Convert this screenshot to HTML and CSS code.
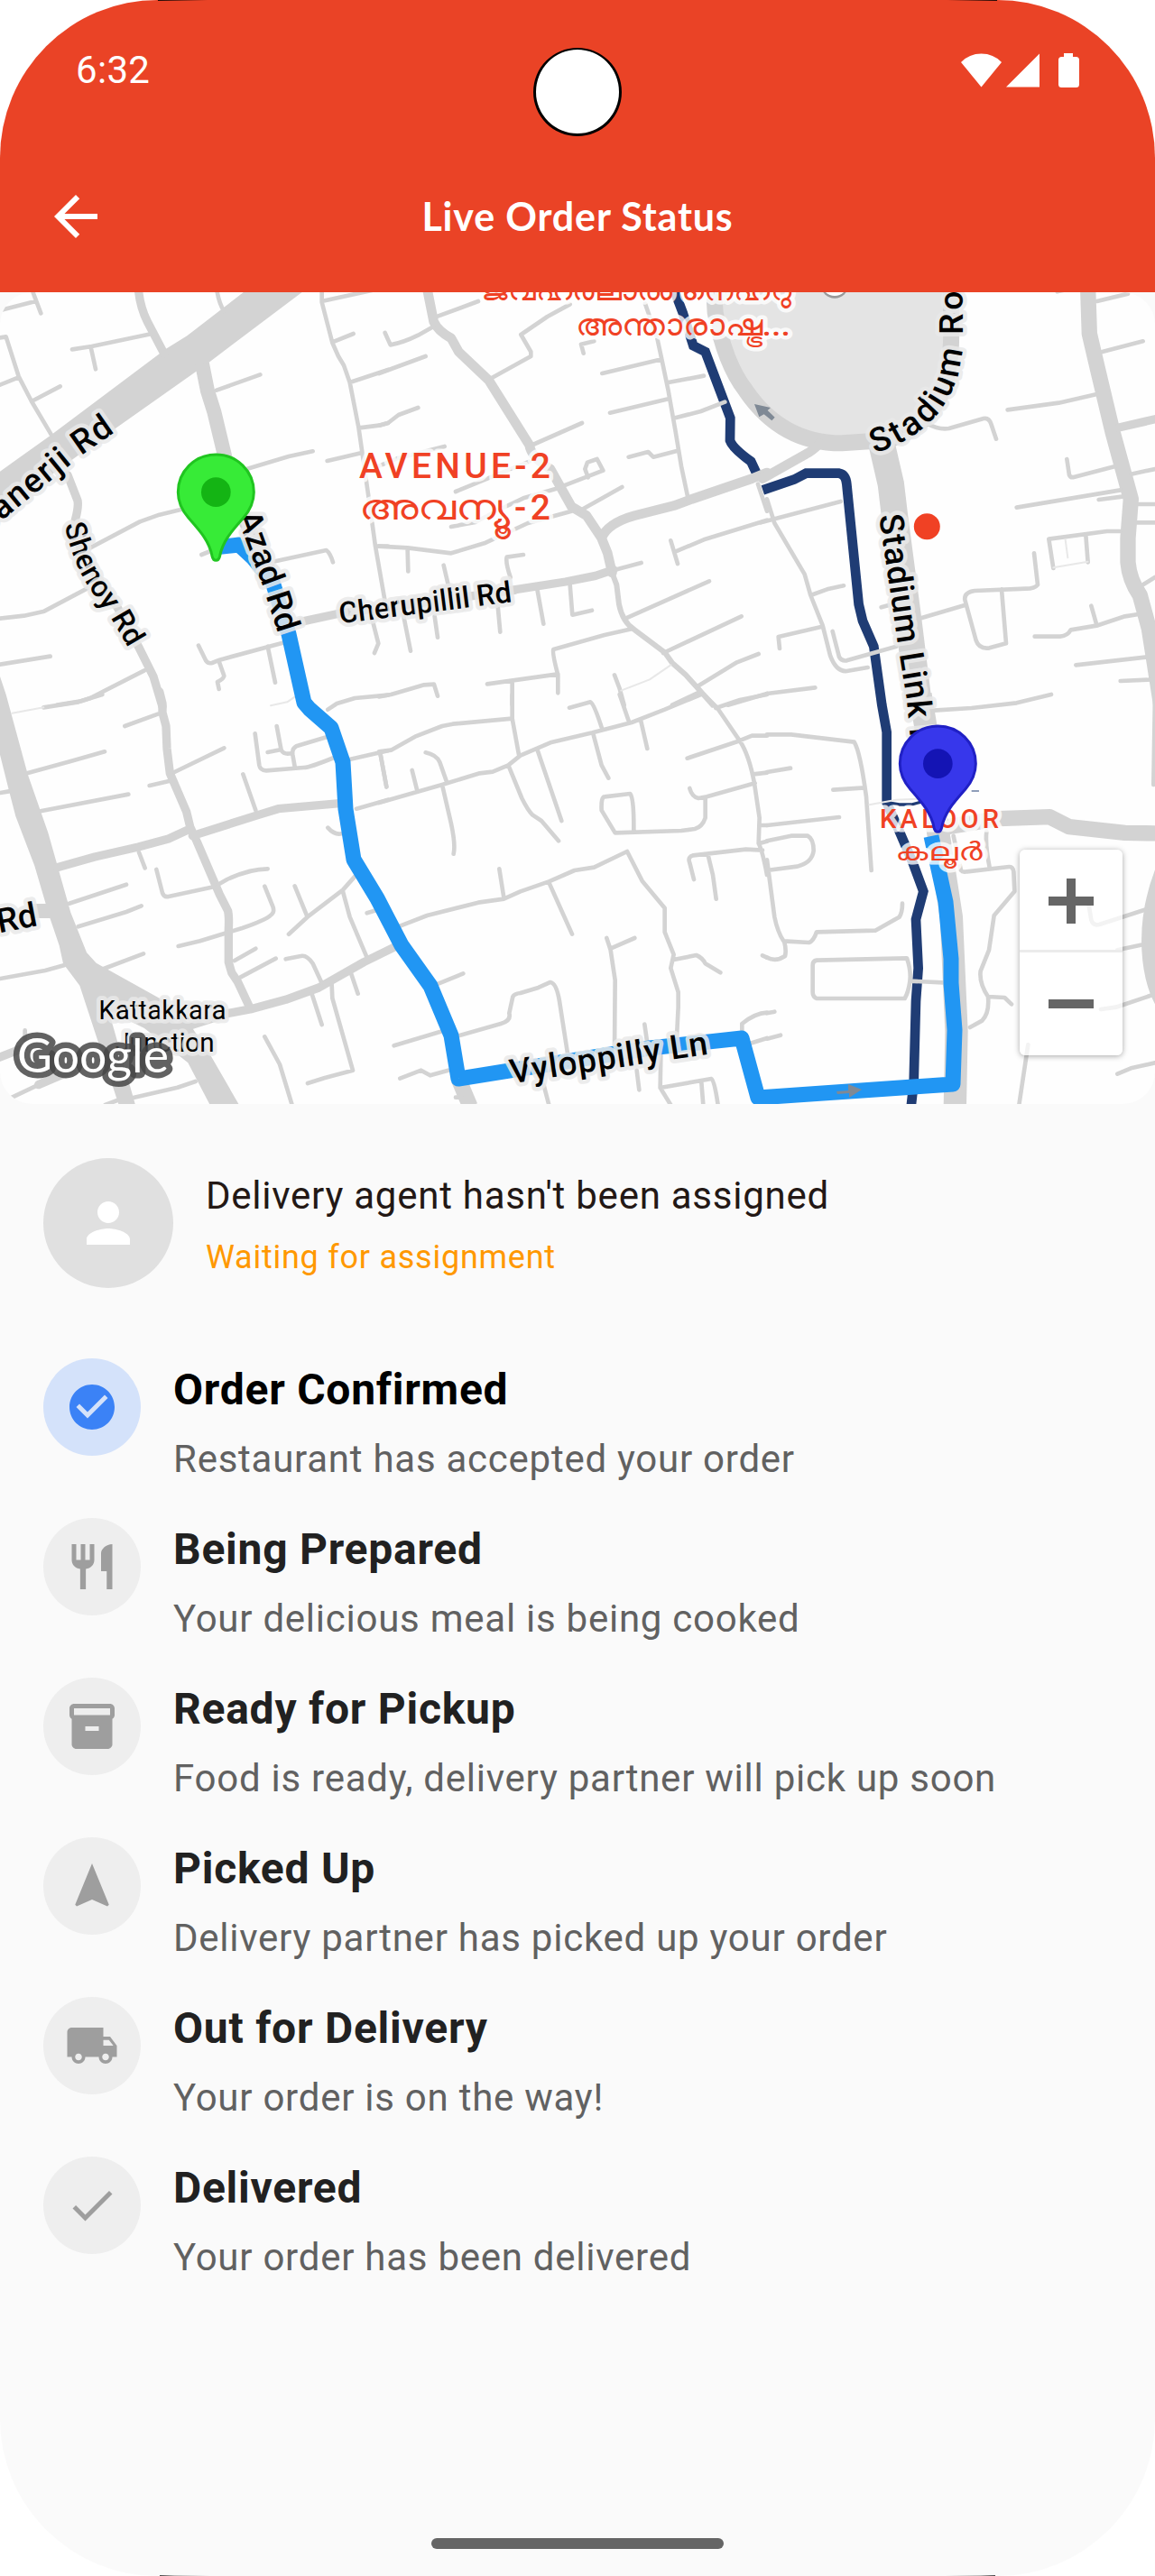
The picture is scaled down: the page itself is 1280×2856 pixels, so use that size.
FILE: index.html
```html
<!DOCTYPE html>
<html lang="en">
<head>
<meta charset="utf-8">
<title>Live Order Status</title>
<link rel="stylesheet" href="styles.css">
</head>
<body>
<div class="phone">
  <header class="top">
    <div class="status-bar">
      <span class="clock">6:32</span>
      <svg class="status-icons" viewBox="0 0 132 40">
        <path d="M22.500 38.500L0 11Q9 1.500 22.500 1.500T45 11Z"/>
        <path d="M87 1.500V38.500H50Z"/>
        <path d="M114 1h10v4h3.500q3.500 0 3.500 3.500v27q0 3.500-3.500 3.500h-16q-3.500 0-3.500-3.500v-27q0-3.500 3.500-3.500h2.500z"/>
      </svg>
    </div>
    <div class="app-bar">
      <svg class="back" viewBox="0 0 24 24"><path d="M20 11H7.830l5.590-5.590L12 4l-8 8 8 8 1.410-1.410L7.830 13H20z"/></svg>
      <h1 class="app-title">Live Order Status</h1>
    </div>
    <span class="camera"></span>
  </header>

  <section class="map-frame">
    <svg class="map" viewBox="0 324 1280 900">
      <!-- stadium -->
      <g transform="translate(850 320) scale(.33333)">
        <path class="stadium" d="M-178-20L-172 80Q-140 250-70 340Q50 515 250 514L340 508Q470 510 550 400Q620 310 612 100V-20"/>
      </g>

      <!-- canal -->
      <g class="canal">
        <path transform="translate(420 320) scale(.33333)" d="M972-20L1010 80L1045 190L1085 210L1168 430L1167 505Q1175 530 1237 575L1260 625"/>
        <path transform="translate(850 320) scale(.33333)" d="M-14 670L90 635L130 614H240Q262 618 265 650L305 1050L318 1105L355 1190L382 1385L398 1475V1710L440 1805L485 1910L520 2005L495 2098L503 2260L495 2370L488 2640L478 2730"/>
        <path transform="translate(850 770) scale(.33333)" class="canal-thin" d="M395 358L440 366H480L510 358"/>
        <path transform="translate(850 770) scale(.33333)" class="canal-hair" d="M680 321H705"/>
      </g>

      <!-- roads, north west -->
      <g transform="translate(0 320) scale(.33333)">
        <path class="area" d="M-10 615L170 487L552 200L622 157L825 0H1020L695 245L370 475L-10 750Z"/>
        <path class="road w28" d="M460 0Q465 60 490 110L545 215M225 620L258 705Q262 725 250 770L270 880L390 1060L460 1190L510 1290L540 1390M1000 1108L1130 1080L1440 1040L1710 1003"/>
        <path class="road w48" d="M672 250L690 340L712 410L748 560L800 740L900 950"/>
        <path class="road" d="M10 70L118 42M105 0L136 82M240 202L305 192L505 150M302 195L318 268M0 163L20 160L62 292L105 375L170 485M0 320L62 295M105 375L200 325M720 0Q728 50 745 75M1070 0V45L1105 180L1125 225L1143 255L1163 312L1192 460L1205 550L1225 690L1248 857L1280 1040M1235 1090L1258 1180L1245 1212M1070 42L1240 5M1105 178L1175 150M1163 312L1290 270M1195 463L1260 455L1290 447M1088 573L1200 547M720 338L865 286M820 600L960 558L1040 541M300 862L465 775L530 752L610 733M670 885L700 873M915 907L1085 870Q1098 880 1107 910M0 1097L80 1088L147 1073L290 997M0 1250L167 1223M190 1385L265 1373L300 1362L480 1270M660 1187L685 1238Q692 1248 705 1245L730 1235L940 1178M727 1237L745 1288Q745 1297 723 1308L728 1332M890 1190L915 1310M1248 857H1290M1090 1400L1120 1380L1180 1362L1290 1352"/>
        <path class="road faint" d="M900 1387L955 1375L980 1358"/>
      </g>

      <!-- roads, north -->
      <g transform="translate(420 320) scale(.33333)">
        <path class="road w32" d="M160 0L182 110Q195 140 240 165L265 210L365 305L500 520Q505 560 570 600L640 725L690 755L740 830L760 880L775 945M740 830Q760 780 850 755L980 722L1040 700L1240 632L1290 612"/>
        <path class="road w28" d="M440 1003L620 975L720 955L780 935"/>
        <path class="road w18" d="M775 945L790 985L798 1050Q810 1110 850 1135L950 1210L975 1245L1020 1285L1070 1340L1110 1385"/>
        <path class="road" d="M195 92L330 42M20 147L38 187Q80 180 130 155L180 127M0 282L155 225M0 455L30 447L65 420L130 396M375 297L505 225V210L472 153L560 93L635 52M885 50L925 165L940 235L962 340L985 470L1005 590L1028 700M742 282L940 235M962 312L1080 290M768 413L962 367M985 430L1070 408L1150 377M830 560L895 543L912 560L990 540M505 522L675 447M0 590L60 565L218 525M255 675L340 640L500 575M240 792L320 777L400 735L480 697L590 665L745 605L725 567L693 578L685 600L695 628M665 740L808 660M0 857L95 862L240 880L350 847L495 780L640 740M95 870L97 940M215 920L230 985M480 885L425 893Q420 910 437 960M80 1080L105 1205M185 1090L195 1160M395 1055L403 1142M527 1005L547 1115M635 985L643 1085L708 1070M785 935L872 912M820 1097L1098 973M945 1212L1205 1090M1060 1322L1190 1243L1262 1215M975 1385L1070 1340M1160 1385L1290 1347M840 1132L750 1152L580 1200Q575 1210 595 1285V1345M360 1315L595 1282M443 1305V1385M783 1285L800 1330L815 1385M0 1357L40 1350L150 1318L183 1316L195 1355M970 838L993 915M985 875L1080 835L1290 770M1260 650L1290 740M680 215L672 185L715 175"/>
        <path class="road faint" d="M805 1337L900 1300L970 1252"/>
      </g>

      <!-- roads, north east -->
      <g transform="translate(850 320) scale(.33333)">
        <path class="road w32" d="M-15 632L130 550Q150 540 175 515"/>
        <path class="road w88" d="M382 520L412 650L425 760L470 1100L505 1385"/>
        <path class="road w52" d="M1067 0L1072 150L1100 270L1150 480L1210 700L1200 830V910Q1205 970 1240 1020L1270 1130L1310 1385"/>
        <path class="road w28" d="M1170 462L1300 432"/>
        <path class="road" d="M965 10L1000 2M1097 42L1200 17M1115 210L1250 175M800 403L970 380L1100 350M535 450Q570 470 605 465L720 432Q738 428 745 450L762 500M997 567L1005 620Q1010 630 1020 627L1155 592M830 728L1175 670M1103 702L1180 692M1210 617L1290 600M1235 717H1290M1230 778H1290M1175 807H1130L937 833L952 930M1060 820L1067 910M888 880L900 985Q890 998 860 998L690 1005Q655 1010 658 1035L695 1170Q705 1200 740 1195L795 1180L780 1000M515 1095L660 1052M380 1060L405 1053M1250 985L1290 960M1078 1055L1095 1115M890 1157H975Q1000 1155 1010 1135L1100 1120L1190 1090L1235 1083M1027 1252L1265 1225M1175 1305L1290 1300M-20 778L245 708M0 700L25 780L125 950L145 1020L185 1120L210 1220Q230 1275 265 1272L335 1260M145 1020L200 1000L255 988M42 1197L38 1158L180 1125M218 1140L240 1225Q248 1240 265 1237L430 1190M0 1347L160 1327"/>
        <path class="road faint" d="M952 928L1067 908M992 835L1000 895"/>
        <path class="arrow" d="M-42 384L12 396L2 405L26 428L16 439L-10 418L-26 427Z"/>
        <circle class="poi-shadow" cx="225" cy="-14" r="46"/>
        <circle class="poi" cx="225" cy="-20" r="44"/>
      </g>

      <!-- roads, south west -->
      <g transform="translate(0 770) scale(.33333)">
        <path class="area" d="M0-60L20 0L92 265L160 460L235 725L288 858L320 893L530 1010L600 1060L640 1110L700 1200L795 1365H698L625 1225L480 1110L360 1050L375 1100L450 1365H395L265 968L210 895L197 835L165 740L115 570L52 405L30 320L0 200Z"/>
        <path class="road w28" d="M190 575L315 540L460 507L560 480L625 450M640 470L860 400L925 380L1130 362M530-10L540 30V60L552 105L555 180L565 262L620 390L632 440L655 490L730 665L758 720Q762 740 760 780V890L770 925L790 955L832 1045M620 1105L760 1060L840 1045L950 1015L1060 975L1210 890L1320 836M-10 1210L80 1175M128 1298L240 1250"/>
        <path class="road w48" d="M100 720H170"/>
        <path class="road" d="M145 43L260 25L340 0M415 105L525 65M90 262L235 222L348 190M135 388L427 332M0 327L30 322M580 258L745 178M497 303L562 288M848 130L862 235Q865 252 885 253L1010 243Q1030 243 1110 210M920 105L935 185Q945 202 970 195M1085 142L985 172Q970 180 973 200L980 240M890 192L935 183M808 265L850 385M1165 215L1290 187M1265 200L1285 307M1185 380L1290 350M1090 443Q1112 468 1135 463M462 525L482 577M520 582L540 660Q545 675 560 672L710 640M725 632L755 615Q830 580 890 580M230 695L420 632M260 772L420 723L470 703M345 912L477 862M0 945L150 918L215 900M593 837L665 820L805 777Q900 745 908 725Q912 715 905 700L880 638M780 885L850 845M800 940L917 878M950 880L1000 870Q1020 865 1040 895L1070 960M980 637L1022 740M960 797L1022 740L1140 650L1180 605M1140 655L1163 740L1220 875M1220 727L1250 718M1103 965L1105 1010L1173 1250L1080 1275L1023 1293M1168 930L1190 995M1035 990L1070 1098M880 1138L930 1230L970 1362M40 1340L130 1297M83 1117V1150M440 1342L590 1307L650 1287M350 1365L390 1350"/>
        <path class="road faint" d="M40 62L145 43"/>
      </g>

      <!-- roads, south -->
      <g transform="translate(420 770) scale(.33333)">
        <path class="road w52" d="M265 1280L303 1370"/>
        <path class="road" d="M0 190L40 185L120 140L210 105L245 98L443 80V0M443 80L465 200M0 360L210 300L335 262L378 257L430 235L470 203L570 160L710 127L840 93L950 50L1070 0M5 200L25 307M155 193Q190 200 202 225L225 290M110 252L127 320M210 300L240 430Q255 500 248 530M430 235L475 345Q495 385 510 400L540 420L597 487M527 185L607 420M712 130L740 235L763 278M633 44L703 25Q715 30 743 118M800 0L832 93M870 85L892 180M1080 0L1125 45L1200 155Q1230 200 1248 295L1265 410L1262 495Q1275 520 1290 600M1120 45L1200 18L1290 0M1025 212L1195 155L1240 137H1290M1245 265L1290 260M1033 312Q1040 340 1062 345L1090 340L1250 295M1085 345V410Q1075 440 1050 447L1005 453L785 460L740 385Q738 340 750 340L835 330Q848 345 847 455M1270 435H1290M1265 495L1290 488M1275 518L1220 515L1045 535Q1025 540 1033 560L1047 615M1093 530L1110 600L1121 680M70 770L160 735L330 692L415 680L470 655L565 622L650 585L715 575L825 522L875 620L950 710V790L980 865L970 910L995 990V1040L990 1140M400 580L415 675M565 625L642 797M757 810L770 850L785 950L783 1190M770 845L850 810M980 882L1055 867Q1075 875 1085 895L1135 925M1275 868L1290 875M190 965L280 928M50 1168L210 1120M265 1135L405 1095Q440 1085 433 1060L445 1005Q450 995 470 993L530 975L570 957Q590 960 600 1020L628 1200M70 1277L140 1250L170 1267L230 1250M883 1097L892 1160M1207 1115V1095Q1250 1060 1290 1058M1235 1160L1290 1143M548 1300L565 1365M857 1250L865 1315M937 1200L935 1308L970 1365M935 1308L1105 1278Q1115 1280 1127 1365M1072 1290L1078 1365M255 1340H275"/>
      </g>

      <!-- roads, south east -->
      <g transform="translate(850 770) scale(.33333)">
        <path class="road w76" d="M510 0L528 110L560 400L613 740L630 1120L625 1370"/>
        <path class="road w52" d="M600 440L770 413L940 407L1005 440L1190 460L1300 462M1315 590Q1265 720 1272 850Q1278 960 1320 1030"/>
        <path class="road" d="M0 133H80L290 158Q310 190 330 340L347 585M220 317L325 310M0 258L78 245M0 435L240 408M0 487L80 470H135Q155 480 155 520Q150 560 100 572L0 585M0 550L25 740Q35 790 55 820L140 825Q155 820 165 790L360 785L440 740Q450 725 450 695M57 820Q65 850 60 870Q30 890 0 875M165 884L465 877Q480 920 475 955Q470 990 458 1011H165Q152 1005 152 990V900Q152 886 165 884M475 953L600 959M0 1060L25 1055M0 1145L45 1133M555 53L680 45L830 28L945 0M730 455Q725 500 740 575M620 470L645 585Q650 592 665 589L805 573Q818 572 820 590L823 655L755 735L738 850L710 920Q705 960 735 1005Q740 1060 715 1085L675 1107M735 1005L790 1008L813 1030M1070 700L1078 750Q1085 770 1105 765L1260 715M1165 850L1250 832M1110 1047L1160 1040L1280 1000M868 1165L838 1365M1165 1262L1210 1243L1290 1225M1290 0L1285 300"/>
        <path class="road faint" d="M340 367L430 350L500 347"/>
      </g>

      <!-- delivery route -->
      <path class="route" d="M237 607L265 604L280 618L302 645L320 703L337 779L343 786L367 807L380 845L383 897L392 953L418 996L445 1048L477 1093L500 1148L508 1196L720 1162L822 1151L840 1217L1056 1202L1058 1142L1054 1090V1063L1048 1000L1032 927"/>
      <path class="arrow" d="M927 1210L940 1209V1202L955 1208L941 1217V1212L928 1213Z"/>

      <circle class="dot" cx="1027.300" cy="583.700" r="14.500"/>

      <!-- road labels -->
      <defs>
        <path id="p-banerji" d="M-140 895L35 748L278 550L387 474"/>
        <path id="p-shenoy" d="M215 785Q240 905 292 988L345 1065L380 1115L440 1218"/>
        <path id="p-azad" d="M787 755L868 975L888 1035L935 1180"/>
        <path id="p-stadium" d="M358 548Q480 510 560 425Q652 320 652 150V-300"/>
        <path id="p-link" d="M372 755L388 860L435 1185L465 1370L490 1640"/>
      </defs>
      <g class="label" transform="translate(0 320) scale(.33333)">
        <text class="road-name wide"><textPath href="#p-banerji" startOffset="100%" text-anchor="end">Banerji Rd</textPath></text>
        <text class="road-name small"><textPath href="#p-shenoy">Shenoy Rd</textPath></text>
        <text class="road-name"><textPath href="#p-azad">Azad Rd</textPath></text>
        <text class="road-name small" transform="translate(1131 1114) rotate(-7.200)" textLength="578">Cherupillil Rd</text>
      </g>
      <g class="label" transform="translate(850 320) scale(.33333)">
        <text class="road-name curved"><textPath href="#p-stadium">Stadium Road</textPath></text>
        <text class="road-name spaced"><textPath href="#p-link">Stadium Link Rd</textPath></text>
      </g>
      <g class="label" transform="translate(420 770) scale(.33333)">
        <text class="road-name" transform="translate(440 1294) rotate(-8.500)" textLength="664">Vyloppilly Ln</text>
      </g>
      <g class="label" transform="translate(0 770) scale(.33333)">
        <text class="road-name" text-anchor="end" transform="translate(128 768) rotate(-11)">Rd</text>
        <text class="place" x="540" y="1080" textLength="424">Kattakkara</text>
        <text class="place" x="548" y="1187" textLength="330">Junction</text>
      </g>

      <!-- area labels -->
      <g class="district">
        <text class="big" x="398" y="530" textLength="212">AVENUE-2</text>
        <text class="big" x="398" y="575.500" textLength="168" lengthAdjust="spacingAndGlyphs">അവന്യൂ</text>
        <text class="big" x="570" y="575.500" textLength="40">-2</text>
        <text class="mid" x="533" y="333" textLength="344" lengthAdjust="spacingAndGlyphs">ജവഹർലാൽ നെഹ്റു</text>
        <text class="mid" x="638" y="372" textLength="238" lengthAdjust="spacingAndGlyphs">അന്താരാഷ്ട്ര...</text>
        <text class="sub" x="975" y="917.500" textLength="132">KALOOR</text>
        <text class="sub" x="992" y="954" textLength="96" lengthAdjust="spacingAndGlyphs">കലൂർ</text>
      </g>

      <!-- pins -->
      <g class="pin-home" transform="translate(0 320) scale(.33333)">
        <path d="M718 904c-7 0-11-6-13-15-9-50-43-86-78-126-22-26-35-54-35-86 0-70 56-125 126-125s126 55 126 125c0 32-13 60-35 86-35 40-69 76-78 126-2 9-6 15-13 15z"/>
        <circle cx="718" cy="677" r="49"/>
      </g>
      <g class="pin-store" transform="translate(800 621) scale(.33333)">
        <path d="M718 904c-7 0-11-6-13-15-9-50-43-86-78-126-22-26-35-54-35-86 0-70 56-125 126-125s126 55 126 125c0 32-13 60-35 86-35 40-69 76-78 126-2 9-6 15-13 15z"/>
        <circle cx="718" cy="677" r="49"/>
      </g>

      <text class="attribution" x="19" y="1189" textLength="168" lengthAdjust="spacingAndGlyphs">Google</text>
    </svg>
    <div class="zoom">
      <svg class="zoom-btn" viewBox="0 0 114 114"><path d="M32 52H52V32H62V52H82V62H62V82H52V62H32Z"/></svg>
      <svg class="zoom-btn" viewBox="0 0 114 114"><path d="M32 52H82V62H32Z"/></svg>
    </div>
  </section>

  <section class="agent">
    <div class="avatar"><svg viewBox="0 0 24 24"><path d="M12 12c2.210 0 4-1.790 4-4s-1.790-4-4-4-4 1.790-4 4 1.790 4 4 4zm0 2c-2.670 0-8 1.340-8 4v2h16v-2c0-2.660-5.330-4-8-4z"/></svg></div>
    <div class="agent-text">
      <div class="agent-name">Delivery agent hasn't been assigned</div>
      <div class="agent-state">Waiting for assignment</div>
    </div>
  </section>

  <ol class="steps">
    <li class="step active">
      <span class="badge"><svg viewBox="0 0 24 24"><path d="M12 2C6.480 2 2 6.480 2 12s4.480 10 10 10 10-4.480 10-10S17.520 2 12 2zm-2 15l-5-5 1.410-1.410L10 14.170l7.590-7.590L19 8l-9 9z"/></svg></span>
      <div class="step-text"><h2 class="step-title">Order Confirmed</h2><p class="step-sub">Restaurant has accepted your order</p></div>
    </li>
    <li class="step">
      <span class="badge"><svg viewBox="0 0 24 24"><path d="M11 9H9V2H7v7H5V2H3v7c0 2.120 1.660 3.840 3.750 3.970V22h2.500v-9.030C11.340 12.840 13 11.120 13 9V2h-2v7zm5-3v8h2.500v8H21V2c-2.760 0-5 2.240-5 4z"/></svg></span>
      <div class="step-text"><h2 class="step-title">Being Prepared</h2><p class="step-sub">Your delicious meal is being cooked</p></div>
    </li>
    <li class="step">
      <span class="badge"><svg viewBox="0 0 24 24"><path fill-rule="evenodd" d="M20 2H4c-1 0-2 .9-2 2v3.010c0 .72.430 1.340 1 1.690V20c0 1.100 1.100 2 2 2h14c.9 0 2-.9 2-2V8.700c.57-.35 1-.97 1-1.690V4c0-1.100-1-2-2-2zm-5 12H9v-2h6v2zm5-7H4V4h16v3z"/></svg></span>
      <div class="step-text"><h2 class="step-title">Ready for Pickup</h2><p class="step-sub">Food is ready, delivery partner will pick up soon</p></div>
    </li>
    <li class="step">
      <span class="badge"><svg viewBox="0 0 24 24"><path d="M12 2L4.500 20.290l.71.71L12 18l6.790 3 .71-.71z"/></svg></span>
      <div class="step-text"><h2 class="step-title">Picked Up</h2><p class="step-sub">Delivery partner has picked up your order</p></div>
    </li>
    <li class="step">
      <span class="badge"><svg viewBox="0 0 24 24"><path d="M20 8h-3V4H3c-1.100 0-2 .9-2 2v11h2c0 1.660 1.340 3 3 3s3-1.340 3-3h6c0 1.660 1.340 3 3 3s3-1.340 3-3h2v-5l-3-4zM6 18.500c-.83 0-1.500-.67-1.500-1.500s.67-1.500 1.500-1.500 1.500.67 1.500 1.500-.67 1.500-1.500 1.500zm13.500-9l1.960 2.500H17V9.500h2.500zm-1.500 9c-.83 0-1.500-.67-1.500-1.500s.67-1.500 1.500-1.500 1.500.67 1.500 1.500-.67 1.500-1.500 1.500z"/></svg></span>
      <div class="step-text"><h2 class="step-title">Out for Delivery</h2><p class="step-sub">Your order is on the way!</p></div>
    </li>
    <li class="step">
      <span class="badge"><svg viewBox="0 0 24 24"><path d="M9 16.170L4.830 12l-1.420 1.410L9 19 21 7l-1.410-1.410z"/></svg></span>
      <div class="step-text"><h2 class="step-title">Delivered</h2><p class="step-sub">Your order has been delivered</p></div>
    </li>
  </ol>

  <div class="home-bar"></div>
</div>
</body>
</html>
```
FILE: styles.css
```css
* { box-sizing: border-box; margin: 0; padding: 0; }
body { background: #fff; font-family: Roboto, "Noto Sans", sans-serif; }

.phone {
  width: 1280px;
  height: 2856px;
  display: flex;
  flex-direction: column;
  background:
    linear-gradient(90deg, #444, #bbb 30%, #fafafa) 177px 100% / 55px 1px no-repeat,
    linear-gradient(270deg, #444, #bbb 30%, #fafafa) 1048px 100% / 55px 1px no-repeat,
    #fafafa;
  border-radius: 175px;
  overflow: hidden;
}

.top {
  position: relative;
  flex: none;
  height: 324px;
  background:
    linear-gradient(90deg, #200a06, #ea4326) 175px 0 / 55px 1px no-repeat,
    linear-gradient(270deg, #200a06, #ea4326) 1050px 0 / 55px 1px no-repeat,
    #ea4326;
  color: #fff;
}
.status-bar {
  height: 156px;
  padding: 0 83px 0 84px;
  display: flex;
  align-items: center;
  justify-content: space-between;
}
.clock { font-size: 42px; line-height: 50px; letter-spacing: .3px; }
.status-icons { width: 132px; height: 40px; fill: #fff; }
.app-bar {
  height: 168px;
  padding: 0 48px;
  display: grid;
  grid-template-columns: 72px 1fr 72px;
  align-items: center;
}
.back { width: 72px; height: 72px; fill: #fff; }
.app-title { font: 700 43px/60px Lato, "Open Sans", sans-serif; text-align: center; letter-spacing: .85px; }
.camera {
  position: absolute;
  left: 591px;
  top: 53px;
  width: 98px;
  height: 98px;
  border-radius: 50%;
  background: #fff;
  border: 3px solid #000;
  border-top-width: 2px;
}

.map-frame { position: relative; flex: none; height: 900px; background: #fefefe; border-radius: 36px; overflow: hidden; }
.map { display: block; width: 1280px; height: 900px; }
.stadium { fill: #e4e4e4; stroke: #d3d3d3; stroke-width: 54; }
.area { fill: #d3d3d3; }
.road { fill: none; stroke: #d3d3d3; stroke-width: 14; stroke-linecap: round; stroke-linejoin: round; }
.faint { stroke: #e8e8e8; stroke-width: 6; }
.w18 { stroke-width: 18; }
.w28 { stroke-width: 28; }
.w32 { stroke-width: 32; }
.w48 { stroke-width: 48; stroke-linecap: butt; }
.w52 { stroke-width: 52; stroke-linecap: butt; }
.w76 { stroke-width: 76; stroke-linecap: butt; }
.w88 { stroke-width: 88; stroke-linecap: butt; }
.canal { fill: none; stroke: #1f3c74; stroke-width: 32; }
.canal-thin { stroke-width: 10; }
.canal-hair { stroke-width: 3; }
.route { fill: none; stroke: #2196f3; stroke-width: 17; stroke-linejoin: round; }
.arrow { fill: #7f8995; }
.dot { fill: #f04124; }
.poi { fill: #fff; }
.poi-shadow { fill: #999; }

.label, .district { stroke-linejoin: round; }
.label text { stroke: rgba(233, 233, 233, .85); stroke-width: 28; paint-order: stroke; fill: #000; }
.road-name { font-size: 112px; font-weight: 500; }
.road-name.small { font-size: 98px; }
.road-name.wide { letter-spacing: 5px; }
.road-name.curved { letter-spacing: 11px; }
.road-name.spaced { letter-spacing: 2.5px; }
.place { font-size: 89px; text-anchor: middle; }
.district text { fill: #f04124; stroke: rgba(255, 255, 255, .8); stroke-width: 9; font-weight: 500; paint-order: stroke; }
.district .big { font-size: 39px; }
.district .mid { font-size: 33px; }
.district .sub { font-size: 29px; }
.attribution {
  font: 400 52px Lato, sans-serif;
  fill: #fff;
  stroke: rgba(70, 70, 70, .85);
  stroke-width: 13;
  stroke-linejoin: round;
  paint-order: stroke;
}

.pin-home path { fill: #37eb37; stroke: #20c520; stroke-width: 9; }
.pin-home circle { fill: #14b414; }
.pin-store path { fill: #3737eb; stroke: #2020c5; stroke-width: 9; }
.pin-store circle { fill: #1414b4; }

.zoom {
  position: absolute;
  right: 36px;
  top: 618px;
  width: 114px;
  height: 228px;
  display: flex;
  flex-direction: column;
  border-radius: 6px;
  background: rgba(255, 255, 255, .72);
  box-shadow: 0 1px 6px rgba(0, 0, 0, .35);
}
.zoom-btn { display: block; width: 114px; height: 114px; fill: #666; }
.zoom-btn + .zoom-btn { box-shadow: 0 -2px 0 1px #ebebeb; clip-path: inset(-3px 0 0 0); }

.agent { flex: none; display: flex; align-items: center; gap: 36px; margin: 60px 48px 78px; height: 144px; }
.avatar {
  width: 144px;
  height: 144px;
  border-radius: 50%;
  background: #e0e0e0;
  display: flex;
  align-items: center;
  justify-content: center;
}
.avatar svg { width: 72px; height: 72px; fill: #fff; }
.agent-text { display: flex; flex-direction: column; gap: 14px; padding-top: 2px; }
.agent-name { font-size: 42px; line-height: 60px; letter-spacing: .75px; color: #231815; }
.agent-state { font-size: 36px; line-height: 48px; letter-spacing: .75px; color: #ff9800; }

.steps { flex: none; list-style: none; padding: 0 48px; }
.step { display: flex; gap: 36px; height: 177px; }
.badge {
  flex: none;
  width: 108px;
  height: 108px;
  border-radius: 50%;
  background: #eee;
  display: flex;
  align-items: center;
  justify-content: center;
}
.badge svg { width: 60px; height: 60px; fill: #9e9e9e; }
.active .badge { background: #d4e2fa; }
.active .badge svg { fill: #3b82f6; }
.step-text { padding-top: 1px; }
.step-title { font-size: 48px; line-height: 68px; font-weight: 700; letter-spacing: .75px; color: #212121; }
.active .step-title { color: #000; }
.step-sub { margin-top: 13px; font-size: 42px; line-height: 60px; letter-spacing: .75px; color: #616161; }

.home-bar { flex: none; width: 324px; height: 12px; border-radius: 6px; margin: auto auto 30px; background: #656565; }
```
